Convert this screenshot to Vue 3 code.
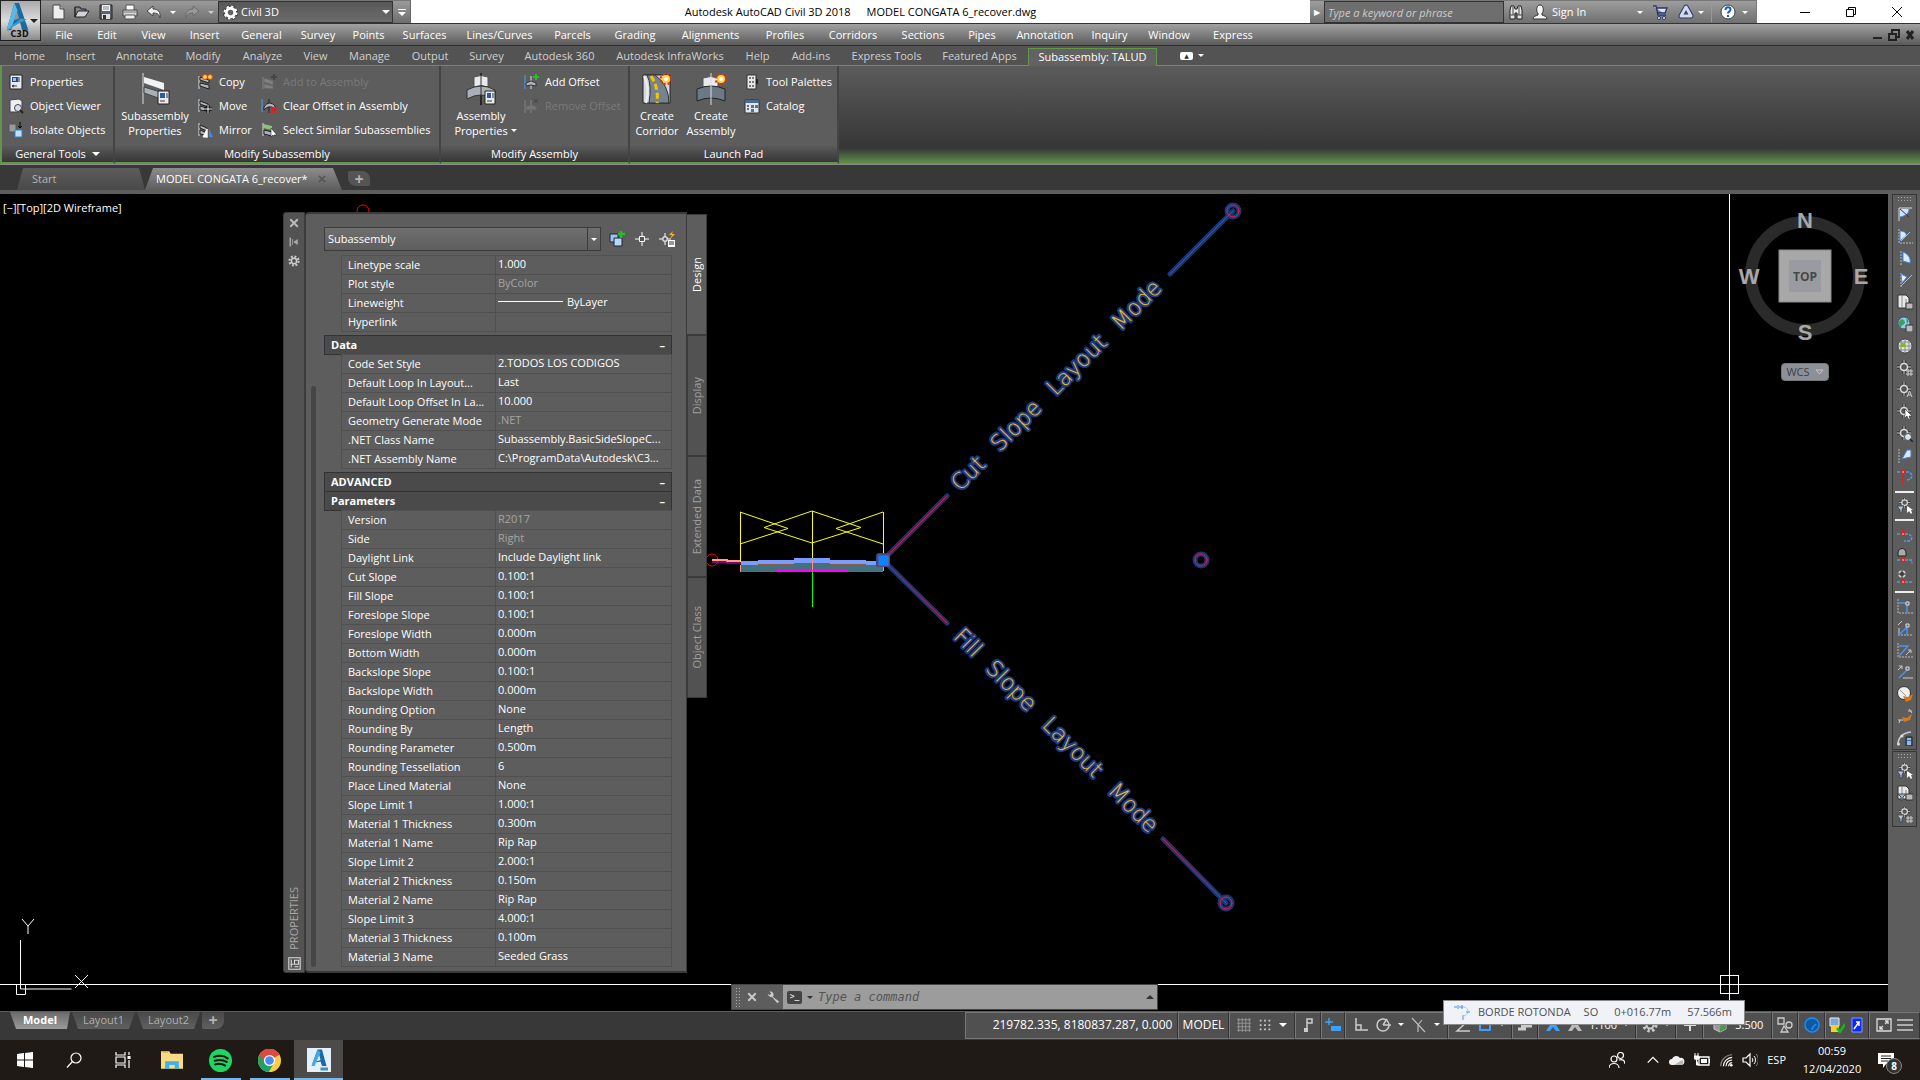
<script setup>
import { h } from 'vue'

const icons = {
  newFile: '<path d="M3 1h7l4 4v10H3z" fill="#eee" stroke="#444"/><path d="M10 1v4h4" fill="#bbb" stroke="#444"/>',
  open: '<path d="M1 3h5l1 2h5v3" fill="#777" stroke="#222"/><path d="M1 3v10l3-6h11l-4 6H1z" fill="#cfd3da" stroke="#222"/>',
  save: '<path d="M2 1h12v14H2z" fill="#5c6470" stroke="#222"/><path d="M4 1h8v6H4z" fill="#f2f2f2"/><path d="M5 3h6M5 5h6" stroke="#888"/><path d="M4 10h8v5H4z" fill="#ddd"/><path d="M5 11h3v4H5z" fill="#333"/>',
  print: '<path d="M4 1h8v6H4z" fill="#fff" stroke="#555"/><path d="M1 6h14v6H1z" fill="#d8d8d8" stroke="#444"/><path d="M3 11h10v4H3z" fill="#eee" stroke="#555"/><path d="M2 8h12" stroke="#777"/>',
  undo: '<path d="M1 7l6-5v3c5 0 8 3 7 9-1-4-3-5-7-5v3z" fill="#eee" stroke="#444"/>',
  redo: '<path d="M15 7L9 2v3c-5 0-8 3-7 9 1-4 3-5 7-5v3z" fill="#999" stroke="#6a6a6a"/>',
  gear: '<circle cx="8" cy="8" r="6" fill="none" stroke="#222" stroke-width="4" stroke-dasharray="3.2 1.5"/><circle cx="8" cy="8" r="4.5" fill="none" stroke="#fff" stroke-width="3"/><circle cx="8" cy="8" r="6.5" fill="none" stroke="#fff" stroke-width="2" stroke-dasharray="2.6 2.5"/>',
  gearGray: '<circle cx="8" cy="8" r="3.5" fill="none" stroke="#ccc" stroke-width="2"/><circle cx="8" cy="8" r="6" fill="none" stroke="#ccc" stroke-width="3" stroke-dasharray="2.4 2.3"/>',
  binoc: '<path d="M2 6l1-4h3l1 3h2l1-3h3l1 4v9H9V9H7v6H2z" fill="#e6e6ea" stroke="#222"/><path d="M2 11h5M9 11h5M5 3v8M11 3v8" stroke="#444"/>',
  person: '<path d="M1 15c0-3 3-3 5-4V9C4 8 4 1 8 1s4 7 2 8v2c2 1 5 1 5 4z" fill="#f4f4f8" stroke="#333"/>',
  cart: '<path d="M1 2h3l2 9h8M4 4h11l-2 5H6" fill="#dfe3f2" stroke="#26366f" stroke-width="1.3"/><circle cx="7" cy="14" r="1.5" fill="#fff" stroke="#26366f"/><circle cx="12" cy="14" r="1.5" fill="#fff" stroke="#26366f"/>',
  aApp: '<path d="M8 3L3 12h10z" fill="none" stroke="#26366f" stroke-width="5" stroke-linejoin="round"/><path d="M8 3L3 12h10z" fill="none" stroke="#d5daea" stroke-width="3" stroke-linejoin="round"/>',
  help: '<circle cx="8" cy="8" r="7" fill="#fff" stroke="#345"/><path d="M5.500 6c0-4 5-3.500 5-.5 0 2-2.500 2-2.500 4M8 11v2" fill="none" stroke="#1f57c0" stroke-width="2"/>',
  props: '<path d="M2 1h12v14H2z" fill="#e8ecf2" stroke="#222"/><path d="M4 3h6v5H4z" fill="#234a8c"/><path d="M5 4h3v3H5z" fill="#9dbff0"/><path d="M11 3v5M4 12h5M4 12l2-1M4 12l2 1" stroke="#333"/>',
  viewer: '<path d="M2 2l9-1 3 2v9l-3 2H2z" fill="#eceff4" stroke="#444"/><circle cx="10" cy="10" r="3.500" fill="#d5dfec" stroke="#444"/><path d="M12 12l3 3" stroke="#222" stroke-width="2"/>',
  isolate: '<path d="M1 2h7v8H1z" fill="#9a9a9a" stroke="#555"/><path d="M7 8h7v7H7z" fill="#bfe0fa" stroke="#3180c8"/><path d="M12 0v6M10 4l2 2 2-2" stroke="#000" fill="none"/>',
  copy: '<path d="M2 2v13" stroke="#ddd"/><path d="M3 3l9 3v3L3 6zM3 9l9 2v4L3 12z" fill="#aeb4bc" stroke="#222"/><circle cx="8" cy="3" r="2.500" fill="#ffd23c" stroke="#d4481c"/><circle cx="13" cy="3" r="2.500" fill="#ffd23c" stroke="#d4481c"/>',
  move: '<path d="M2 1v13" stroke="#ddd"/><path d="M3 3l8 3v3L3 6zM3 8l7 2v3L3 12z" fill="#aeb4bc" stroke="#222"/><path d="M11 7v8M7 11h8" stroke="#000" stroke-width="3"/><path d="M11 7v8M7 11h8" stroke="#fff"/>',
  mirror: '<path d="M2 1v13" stroke="#ddd"/><path d="M3 3l7 3v3L3 6zM3 8l5 2v3l-5-1z" fill="#aeb4bc" stroke="#222"/><path d="M10 7l-4 8h4zM10 7v9" fill="#fff" stroke="#fff"/><path d="M12 7l4 8h-4z" fill="#3c8ee0"/>',
  addTo: '<path d="M2 3v12" stroke="#888"/><path d="M3 4l9 3v4L3 8zM3 10l9 2v3l-9-1z" fill="#808080" stroke="#6a6a6a"/><path d="M13 0v6M10 3h6" stroke="#444" stroke-width="2"/>',
  clear: '<path d="M1 1v13" stroke="#4aa0ee"/><path d="M8 1v14" stroke="#222"/><path d="M3 9c3-5 8-5 11-1v3c-3-3-8-3-11 1z" fill="#aeb4bc" stroke="#222"/><path d="M10 9l6 6M16 9l-6 6" stroke="#e02020" stroke-width="2"/>',
  select: '<path d="M2 1v13" stroke="#ddd"/><path d="M2 2l9 2v4L2 6z" fill="#8fc27a"/><path d="M3 8l8 2v4l-8-2z" fill="#aeb4bc" stroke="#222"/><path d="M10 6v9l2-2 1 3h1l-1-3h3z" fill="#fff" stroke="#222" stroke-width=".6"/>',
  addOff: '<path d="M2 1v14" stroke="#4aa0ee"/><path d="M8 2v13" stroke="#ddd"/><path d="M3 9l5-2 5 2v3l-5-1-5 1z" fill="#aeb4bc" stroke="#333"/><path d="M13 0v6M10 3h6" stroke="#1fc01f" stroke-width="2"/>',
  remOff: '<path d="M2 2v13M8 2v13" stroke="#848484"/><path d="M3 9l5-2 5 2v3l-5-1-5 1z" fill="#777" stroke="#6a6a6a"/><path d="M11 1l4 4M15 1l-4 4" stroke="#444"/>',
  palettes: '<path d="M3 1h9v14H3z" fill="#e8e8e8" stroke="#333"/><path d="M5 3h2v2H5zM8 3h2v2H8zM5 7h2v2H5zM8 7h2v2H8zM5 11h2v2H5zM8 11h2v2H8z" fill="#777"/><path d="M13 5v5" stroke="#222" stroke-width="2"/>',
  catalog: '<path d="M1 2h14v13H1z" fill="#dfe6ee" stroke="#333"/><path d="M1 2h14v3H1z" fill="#4c6b90"/><path d="M3 7h2v2H3zM3 10h2v2H3zM7 7h3v3H7zM11 7h3v3h-3zM7 11h3v3H7z" fill="#5b708c"/>',
  quick: '<path d="M1 3h8v8H1z" fill="#9cc4ee" stroke="#223"/><path d="M5 7h8v8H5z" fill="#b8d6f6" stroke="#223"/><path d="M12 0v7M9 3h7" stroke="#20c020" stroke-width="2.500"/>',
  pick: '<path d="M8 1v14M1 8h14" stroke="#fff"/><path d="M5.500 5.500h5v5h-5z" fill="#555" stroke="#fff"/>',
  pickq: '<path d="M6 2v12M0 8h12" stroke="#fff"/><path d="M4 6h4v4H4z" fill="#555" stroke="#fff"/><path d="M14 0l-4 4h3l-2 4 5-5h-3z" fill="#ffb030"/><path d="M9 9h7v7H9z" fill="#fff"/><path d="M10 11h5M10 13h5" stroke="#333"/>',
  arcA: '<path d="M2 2v13M2 2h13" stroke="#ddd"/><path d="M3 3h9c0 5-4 7-9 8z" fill="#cfe2f8"/><path d="M12 3c0 5-4 7-9 8" stroke="#3f8ae0" fill="none"/><path d="M3 3l9 8" stroke="#333"/>',
  arcB: '<path d="M2 1v14h14" stroke="#bbb" stroke-dasharray="2 1" fill="none"/><path d="M3 3c5 0 7 3 6 5l-6 5z" fill="#dce9f8" stroke="#3f8ae0"/><path d="M4 13l9-9" stroke="#bbb"/>',
  arcC: '<path d="M4 1v14" stroke="#bbb" stroke-dasharray="2 1"/><path d="M6 2c5 2 8 6 7 11L6 11z" fill="#dce9f8" stroke="#3f8ae0"/>',
  arcD: '<path d="M4 1v14" stroke="#bbb" stroke-dasharray="2 1"/><path d="M4 2l6 3-5 6z" fill="#e8f0fa" stroke="#3f8ae0"/><path d="M4 14L15 3" stroke="#bbb"/>',
  sheet: '<path d="M1 1h8l3 3v10H1z" fill="#e8e8e8" stroke="#333"/><path d="M5 1v13M9 5v9" stroke="#888"/><path d="M9 9h7v6H9z" fill="#bbb" stroke="#333"/>',
  globe: '<circle cx="7" cy="7" r="6" fill="#8fd0e8" stroke="#456"/><path d="M3 4c3-2 4 0 5 2S4 9 4 12C2 10 1 7 3 4zM9 2l3 3-2 3z" fill="#3e9e6a"/><path d="M9 9h7v7H9z" fill="#bbb" stroke="#333"/>',
  grid: '<circle cx="8" cy="8" r="7" fill="#e2e2e2" stroke="#444"/><path d="M1 8h14M8 1v14M3 4h10M3 12h10M4 3v10M12 3v10" stroke="#888"/><path d="M4 5h4v4H4z" fill="#6fc21f"/>',
  tgt: '<path d="M7 0v14M0 7h14" stroke="#222" stroke-width="3"/><path d="M7 0v14M0 7h14" stroke="#ddd"/><circle cx="7" cy="7" r="3.500" fill="#555" stroke="#ddd" stroke-width="1.500"/>',
  cone: '<path d="M2 1v14" stroke="#bbb" stroke-dasharray="2 1"/><path d="M5 11l5-9h4v7l-5 1z" fill="#dce6f4" stroke="#3f7fd0"/>',
  redT: '<path d="M0 2h4M9 2h3c4 2 4 7-2 8" stroke="#5b95dc" stroke-width="1.500" stroke-dasharray="3 1" fill="none"/><path d="M6 2v14" stroke="#e02020" stroke-width="1.500"/><circle cx="6" cy="2" r="1.500" fill="#fff" stroke="#e02020" stroke-width="1.500"/>',
  redB: '<path d="M0 8h4M8 8h3c5 1 5 7 0 7H7" stroke="#5b95dc" stroke-width="1.500" stroke-dasharray="3 1" fill="none"/><path d="M6 1v7" stroke="#e02020"/><circle cx="6" cy="8" r="1.500" fill="#fff" stroke="#e02020" stroke-width="1.500"/>',
  redC: '<path d="M1 5c0-6 8-6 8 0v3H1z" fill="#aaa" stroke="#222"/><path d="M0 12h15" stroke="#5b95dc" stroke-width="1.500" stroke-dasharray="3 1"/><path d="M12 12c3 0 3 2 3 4" stroke="#5b95dc" fill="none"/><circle cx="6" cy="12" r="1.500" fill="#fff" stroke="#e02020" stroke-width="1.500"/>',
  redD: '<circle cx="5" cy="4" r="3" fill="none" stroke="#ccc" stroke-width="1.500"/><path d="M5 0v8M1 4h8" stroke="#333"/><path d="M0 12h15" stroke="#5b95dc" stroke-width="1.500" stroke-dasharray="3 1"/><circle cx="6" cy="12" r="1.500" fill="#fff" stroke="#e02020" stroke-width="1.500"/>',
  ptA: '<path d="M1 1v14h15" stroke="#bbb" stroke-dasharray="2 1" fill="none"/><path d="M2 5h8v10" stroke="#4b93ee" stroke-width="1.500" fill="none"/><path d="M9 4h3v3H9z" fill="#666" stroke="#ddd"/>',
  ptB: '<path d="M1 15h15" stroke="#bbb" stroke-dasharray="2 1"/><path d="M1 5l4-4M2 8v6" stroke="#ccc"/><path d="M2 15l8-8v8" stroke="#4b93ee" stroke-width="1.500" fill="none"/><path d="M9 4h3v3H9z" fill="#666" stroke="#ddd"/>',
  ptC: '<path d="M1 1v14h15" stroke="#bbb" stroke-dasharray="2 1" fill="none"/><path d="M2 4h9L2 14" stroke="#4b93ee" stroke-width="1.500" fill="none"/><path d="M9 13l5-5h-3m3 0v3" stroke="#ccc" fill="none"/>',
  ptD: '<path d="M1 6l4-4H2m3 0v3" stroke="#ccc" fill="none"/><path d="M2 14l9-9" stroke="#4b93ee" stroke-width="1.500"/><path d="M9 3h3v3H9z" fill="#666" stroke="#ddd"/><path d="M6 14h10" stroke="#ccc"/>',
  ball: '<circle cx="7" cy="7" r="6.500" fill="#eee" stroke="#333"/><path d="M3 4l6 6" stroke="#999"/><path d="M6 10l5 1 5-3-2 6-5 2z" fill="#d87818"/>',
  hand: '<path d="M5 9l5 1 5-4-2 6-6 2z" fill="#d87818"/><path d="M2 15l1-3M1 12h5M11 3h4M12 1l3 4" stroke="#ccc"/>',
  calc: '<path d="M1 15c0-8 5-12 13-13" stroke="#ccc" stroke-width="1.500" fill="none"/><path d="M9 7h6v9H9z" fill="#3c6db0" stroke="#223"/><path d="M10 9h4M10 12h4M10 14h4" stroke="#fff"/><circle cx="1.500" cy="14" r="1.500" fill="#ddd"/><circle cx="5" cy="6" r="1.500" fill="#ddd"/>',
  note: '<path d="M7 13V2h5v4H7" fill="none" stroke="#ccc" stroke-width="1.500"/><path d="M4 11h4v4H4z" fill="#ccc"/>',
  dyn: '<path d="M4 1v7M0 5h8" stroke="#3ba0ff" stroke-width="1.500"/><path d="M6 9h10v5H6z" fill="#3ba0ff"/>',
  ortho: '<path d="M3 1v12h12M3 8h5v5" fill="none" stroke="#ccc" stroke-width="1.500"/>',
  polar: '<circle cx="7" cy="8" r="6" fill="none" stroke="#ccc" stroke-width="1.500"/><path d="M7 8h8M7 8l4-6" stroke="#ccc" stroke-width="1.500"/>',
  iso: '<path d="M1 1l13 14M11 3L7 8M7 8v7" stroke="#bbb" stroke-width="1.200"/>',
  angle: '<path d="M14 3L2 14h13" fill="none" stroke="#ccc" stroke-width="1.500"/>',
  osnap: '<path d="M3 3h10v10H3z" fill="none" stroke="#3ba0ff" stroke-width="2"/>',
  lwt: '<path d="M1 12h8M4 9h11" stroke="#ccc" stroke-width="3"/>',
  annoB: '<path d="M8 3L1 14h4l3-4 3 4h4z" fill="#3ba0ff"/>',
  annoG: '<path d="M8 3L1 14h4l3-4 3 4h4z" fill="#bbb"/>',
  plus: '<path d="M8 2v12M2 8h12" stroke="#ddd" stroke-width="2"/>',
  cube: '<path d="M8 3l6 3v6l-6 3-6-3V6z" fill="#999" stroke="#ccc"/><path d="M8 9v6l6-3V6z" fill="#4b9a4b"/>',
  shapes: '<path d="M1 1h6v6H1zM7 9l4 6H4z" fill="none" stroke="#ccc" stroke-width="1.300"/><circle cx="12" cy="8" r="3" fill="none" stroke="#ccc" stroke-width="1.300"/>',
  hw: '<circle cx="8" cy="8" r="7" fill="#0e5aa0" stroke="#1b8cff" stroke-width="1.500"/><path d="M8 11l4-4M7 12h2" stroke="#1b8cff" stroke-width="1.500"/>',
  xref: '<path d="M1 1h9v8H1z" fill="#7aa7d8" stroke="#eee"/><path d="M2 8h8v7H2z" fill="#f5d22a"/><path d="M8 11l3 4 5-8" stroke="#20b020" stroke-width="2.500" fill="none"/>',
  link: '<path d="M3 1h10v14H3z" fill="#0a28ff" stroke="#7a9cff"/><path d="M5 12l5-7H7m3 0v4" stroke="#fff" fill="none" stroke-width="1.500"/>',
  full: '<path d="M1 2h14v12H1z" fill="none" stroke="#ddd" stroke-width="1.300"/><path d="M9 7l3-3M12 7V4H9M7 9l-3 3M4 9v3h3" stroke="#ddd" fill="none" stroke-width="1.300"/>',
  burger: '<path d="M0 3h16M0 8h16M0 13h16" stroke="#ccc" stroke-width="1.600"/>',
  dots: '<path d="M2 0v16M6 0v16M10 0v16M14 0v16M0 2h16M0 6h16M0 10h16M0 14h16" stroke="#9a9a9a" stroke-width="1"/>',
  snap: '<g fill="#ccc"><path d="M2 2h2v2H2zM7 2h2v2H7zM12 2h2v2h-2zM2 7h2v2H2zM7 7h2v2H7zM12 7h2v2h-2zM2 12h2v2H2zM7 12h2v2H7zM12 12h2v2h-2z"/></g>',
  curve: '<path d="M0 3h3M5 3h4M4 1v4M8 1v4" stroke="#4b93ee"/><path d="M9 3c6 0 7 7 1 9" stroke="#9cc0ee" fill="none" stroke-dasharray="3 1"/><path d="M9 11v5M12 8h4" stroke="#4b93ee"/>',
  wrench: '<path d="M14 4a4 4 0 0 1-5 4l-6 7-2-2 7-5c-2-4 1-7 4-6l-2 2 2 2z" fill="#ccc" transform="matrix(-1 0 0 1 16 0)"/>',
  autoHide: '<path d="M3 2v12" stroke="#aaa" stroke-width="2"/><path d="M13 4v8L7 8z" fill="#aaa"/><path d="M6 4v8" stroke="#aaa"/>',
  cross: '<path d="M3 3l10 10M13 3L3 13" stroke="currentColor" stroke-width="2.500"/>',
  palIcon: '<path d="M1 1h14v14H1z" fill="none" stroke="#ddd" stroke-width="1.300"/><path d="M4 3v10M7 9H3M8 4h5v5H8zM8 12h5" fill="none" stroke="#ddd" stroke-width="1.300"/>',
  windows: '<path d="M0 2l7-1v6.500H0zM8 1l8-1v7.500H8zM0 8.500h7V15l-7-1zM8 8.500h8V16l-8-1z" fill="#fff"/>',
  search: '<circle cx="10" cy="6" r="5" fill="none" stroke="#fff" stroke-width="1.200"/><path d="M6.500 9.500L1 15.500" stroke="#fff" stroke-width="1.200"/>',
  task: '<path d="M1 0v3h9V0M1 5h9v6H1zM1 16v-3h9v3M14 0v3M14 8v8" fill="none" stroke="#fff" stroke-width="1.200"/><path d="M12.500 4h3v3h-3z" fill="#fff"/>',
  folder: '<path d="M0 1h6l1 2h9v12H0z" fill="#fadb84"/><path d="M1 1h4v1H1z" fill="#d9a334"/><path d="M3 9h10v6h-3v-3H6v3H3z" fill="#3fb3e8"/>',
  spotify: '<circle cx="8" cy="8" r="8" fill="#1ed760"/><path d="M3.500 5.500c3-1 7-.8 9.500 1M4 8.200c3-.8 6-.5 8.300.8M4.300 10.700c2.500-.7 5-.4 7 .8" fill="none" stroke="#111" stroke-width="1.400" stroke-linecap="round"/>',
  chrome: '<circle cx="8" cy="8" r="8" fill="#ffcd42"/><path d="M8 8L1.100 4A8 8 0 0 1 15 4z" fill="#dd4b3e"/><path d="M1.100 4A8 8 0 0 0 7.500 16L11 10 8 8z" fill="#1da362"/><path d="M8 4h7a8 8 0 0 0-14-.2L5 10z" fill="#dd4b3e"/><circle cx="8" cy="8" r="3.900" fill="#fff"/><circle cx="8" cy="8" r="3" fill="#4c8bf5"/>',
  acad: '<path d="M0 0h16v16H0z" fill="#e4f0fa"/><path d="M3 12L7 1h3l3 11h-3l-1-3-5 1z" fill="#1b6aa5"/><path d="M8 4l1 4-3 1z" fill="#e4f0fa"/><path d="M7 1L3 12h2L9 3z" fill="#4aa8dc"/><path d="M9 13h5v2H9z" fill="#3f8fc8"/>',
  logo: '<path d="M1 15L6 0h3l6 15h-4L9.500 10.500 5 12l-1 3z" fill="#1a6aa0"/><path d="M7.500 4l1.500 4.500-3 1z" fill="#8f9499"/><path d="M6 0L1 15l3-1L8 4z" fill="#5cb8e4"/><path d="M5 12l-4 3 13-6-4-.5z" fill="#3a96cc"/>',
  people: '<circle cx="5" cy="7" r="3" fill="none" stroke="#fff" stroke-width="1.200"/><path d="M0 16c0-6 10-6 10 0" fill="none" stroke="#fff" stroke-width="1.200"/><circle cx="11.500" cy="3.500" r="3" fill="none" stroke="#fff" stroke-width="1.200"/><path d="M10 8c3-1 6 0 6 4" fill="none" stroke="#fff" stroke-width="1.200"/>',
  up: '<path d="M2 11l6-6 6 6" fill="none" stroke="#fff" stroke-width="1.500"/>',
  cloud: '<path d="M3 13a3 3 0 0 1 0-6 4.500 4.500 0 0 1 8-1 3.500 3.500 0 0 1 1.500 7z" fill="#f2f2f2"/><path d="M5 13l8-5a3 3 0 0 1 0 5z" fill="#b8b8b8"/>',
  batt: '<path d="M5 5h10v8H5z" fill="none" stroke="#fff" stroke-width="1.300"/><path d="M7 7h6v4H7zM15 7h1v4h-1z" fill="#fff"/><path d="M1 1v3M4 1v3M0 4h5v2c0 2-5 2-5 0zM2.500 7v6H5" stroke="#fff" fill="#fff" stroke-width="1"/>',
  wifi: '<g fill="none" stroke="#fff" stroke-width="1.300"><path d="M2 15C2 8 8 2 15 2" opacity=".5"/><path d="M5 15c0-5 5-10 10-10M8 15c0-4 3-7 7-7M11 15c0-2 2-4 4-4"/></g><circle cx="14" cy="14" r="1.500" fill="#fff"/>',
  vol: '<path d="M1 6h3l4-4v12l-4-4H1z" fill="none" stroke="#fff" stroke-width="1.200"/><path d="M10 6c1 1 1 3 0 4M12 4c2 2 2 6 0 8" fill="none" stroke="#fff"/><path d="M14 2c3 3 3 9 0 12" fill="none" stroke="#888"/>',
  notif: '<path d="M0 1h16v11H8l-3 4v-4H0z" fill="#fff"/><path d="M3 4h10M3 6.500h10M3 9h7" stroke="#222"/>',
}
icons.tgtGrid = icons.tgt + '<path d="M11 9v7M14 9v7M9 11h7M9 14h7" stroke="#ccc"/>'
icons.tgtA = icons.tgt + '<path d="M10 15l2.500-6 2.500 6M11 13h3" stroke="#ccc" fill="none"/>'
icons.tgtCur = icons.tgt + '<path d="M8 5v9l2-2 2 4 1-1-1-3h3z" fill="#fff" stroke="#222" stroke-width=".5"/>'
icons.tgtZoom = icons.tgt + '<circle cx="11" cy="11" r="3.500" fill="#d6e6f5" stroke="#555"/><path d="M13 13l3 3" stroke="#222" stroke-width="1.500"/>'
icons.tgtFun = '<g transform="translate(2 -1) scale(.8)">' + icons.tgt + '</g><path d="M0 8h7l-2 4v3H3v-3z" fill="#b8c6d4" stroke="#445"/><path d="M10 8v7l2-2 2 3 1-1-1-3h2z" fill="#fff"/>'
icons.sheetFun = icons.sheet + '<path d="M1 9h8l-3 3v3H4v-3z" fill="#9fb4c8" stroke="#445"/>'
icons.gridFun = '<g transform="translate(2 -1) scale(.8)">' + icons.tgt + '</g><path d="M0 8h7l-2 4v3H3v-3z" fill="#b8c6d4" stroke="#445"/><path d="M11 9v7M14 9v7M9 11h7M9 14h7" stroke="#ccc"/>'

const Ico = (p) => h('svg', { viewBox: '0 0 16 16', width: p.s || 16, height: p.h || p.s || 16, preserveAspectRatio: 'none', 'aria-hidden': 'true', innerHTML: icons[p.n] })
Ico.props = ['n', 's', 'h']

const menus = [['File', 42], ['Edit', 44], ['View', 49], ['Insert', 53], ['General', 61], ['Survey', 52], ['Points', 49], ['Surfaces', 63], ['Lines/Curves', 87], ['Parcels', 59], ['Grading', 66], ['Alignments', 85], ['Profiles', 64], ['Corridors', 72], ['Sections', 68], ['Pipes', 50], ['Annotation', 76], ['Inquiry', 53], ['Window', 66], ['Express', 62]]
const tabs = [['Home', 53], ['Insert', 49], ['Annotate', 69], ['Modify', 58], ['Analyze', 61], ['View', 45], ['Manage', 63], ['Output', 58], ['Survey', 55], ['Autodesk 360', 91], ['Autodesk InfraWorks', 130], ['Help', 45], ['Add-ins', 62], ['Express Tools', 89], ['Featured Apps', 97]]

const groups = [
  { rows: [['Linetype scale', '1.000'], ['Plot style', 'ByColor', 1], ['Lineweight', 'ByLayer', 2], ['Hyperlink', '']] },
  { title: 'Data', rows: [['Code Set Style', '2.TODOS LOS CODIGOS'], ['Default Loop In Layout...', 'Last'], ['Default Loop Offset In La...', '10.000'], ['Geometry Generate Mode', '.NET', 1], ['.NET Class Name', 'Subassembly.BasicSideSlopeC...'], ['.NET Assembly Name', 'C:\\ProgramData\\Autodesk\\C3...']] },
  { title: 'ADVANCED', rows: [] },
  { title: 'Parameters', rows: [['Version', 'R2017', 1], ['Side', 'Right', 1], ['Daylight Link', 'Include Daylight link'], ['Cut Slope', '0.100:1'], ['Fill Slope', '0.100:1'], ['Foreslope Slope', '0.100:1'], ['Foreslope Width', '0.000m'], ['Bottom Width', '0.000m'], ['Backslope Slope', '0.100:1'], ['Backslope Width', '0.000m'], ['Rounding Option', 'None'], ['Rounding By', 'Length'], ['Rounding Parameter', '0.500m'], ['Rounding Tessellation', '6'], ['Place Lined Material', 'None'], ['Slope Limit 1', '1.000:1'], ['Material 1 Thickness', '0.300m'], ['Material 1 Name', 'Rip Rap'], ['Slope Limit 2', '2.000:1'], ['Material 2 Thickness', '0.150m'], ['Material 2 Name', 'Rip Rap'], ['Slope Limit 3', '4.000:1'], ['Material 3 Thickness', '0.100m'], ['Material 3 Name', 'Seeded Grass']] },
]
const sideTabs = ['Design', 'Display', 'Extended Data', 'Object Class']
const dock = [
  ['arcA', 'arcB', 'arcC', 'arcD', 'sheet', 'globe', 'grid', 'tgtGrid', 'tgtA', 'tgtCur', 'tgtZoom', 'cone', 'redT', '-', 'tgtFun', '-', 'redB', 'redC', 'redD', '-', 'ptA', 'ptB', 'ptC', 'ptD', 'ball', 'hand', 'calc'],
  ['tgtFun', 'sheetFun', 'gridFun'],
]
const status = [
  { w: 26, items: ['note'] }, { w: 24, items: ['dyn'] }, { w: 103, items: ['ortho', 'polar', '▾', 'iso', '▾'] },
  { w: 64, items: ['angle', 'osnap', '▾'] }, { w: 26, items: ['lwt'] }, { w: 98, items: ['annoB', 'annoG', '1.100', '▾'] },
  { w: 40, items: ['gearGray', '▾'] }, { w: 27, items: ['plus'] }, { w: 69, items: ['cube', '3.500'] }, { w: 26, items: ['shapes'] },
  { w: 27, items: ['hw'] }, { w: 44, items: ['xref', 'link'] }, { w: 51, items: ['full', 'burger'] },
]
</script>

<template>
  <div class="app">
    <header class="title-bar">
      <div class="quick">
        <button aria-label="New"><Ico n="newFile" /></button>
        <button aria-label="Open"><Ico n="open" /></button>
        <button aria-label="Save"><Ico n="save" /></button>
        <button aria-label="Print"><Ico n="print" /></button>
        <button aria-label="Undo"><Ico n="undo" /></button>
        <i class="tri narrow"></i>
        <button aria-label="Redo"><Ico n="redo" /></button>
        <i class="tri narrow dim"></i>
        <label class="workspace"><Ico n="gear" :s="15" /><select aria-label="Workspace"><option>Civil 3D</option></select><i class="tri"></i></label>
        <button class="more" aria-label="Customize"><i class="bar"></i><i class="tri"></i></button>
      </div>
      <div class="caption"><span>Autodesk AutoCAD Civil 3D 2018</span><span>MODEL CONGATA 6_recover.dwg</span></div>
      <div class="info">
        <button class="expand" aria-label="Collapse">▶</button>
        <input type="text" placeholder="Type a keyword or phrase" aria-label="Search" />
        <button aria-label="Find"><Ico n="binoc" /></button>
        <button class="sign"><Ico n="person" /><span>Sign In</span><i class="tri small"></i></button>
        <button aria-label="Store"><Ico n="cart" /></button>
        <button class="apps" aria-label="Apps"><Ico n="aApp" /><i class="tri small"></i></button>
        <button class="helpb" aria-label="Help"><Ico n="help" /><i class="tri small"></i></button>
      </div>
      <div class="win">
        <button aria-label="Minimize"><svg width="10" height="10"><path d="M0 5.500h10" stroke="#000" /></svg></button>
        <button aria-label="Restore"><svg width="10" height="10"><path d="M.5 2.500h7v7h-7zM2.500 2.500v-2h7v7h-2" fill="none" stroke="#000" /></svg></button>
        <button aria-label="Close"><svg width="10" height="10"><path d="M0 0l10 10M10 0L0 10" stroke="#000" /></svg></button>
      </div>
    </header>
    <button class="app-btn" aria-label="Application menu"><Ico n="logo" :s="25" :h="29" /><i class="tri dark"></i><b>C3D</b></button>

    <nav class="menu-bar">
      <button v-for="m in menus" :key="m[0]" :style="{ width: m[1] + 'px' }">{{ m[0] }}</button>
      <div class="doc-win">
        <svg width="44" height="14"><path d="M1 10h9" stroke="#222" stroke-width="2" /><path d="M17 6h7v6h-7zM20 5V2h7v7h-3" fill="none" stroke="#222" stroke-width="2" /><path d="M35 3l6 8M41 3l-6 8" stroke="#222" stroke-width="3" /></svg>
      </div>
    </nav>

    <nav class="tab-bar">
      <button v-for="t in tabs" :key="t[0]" :style="{ width: t[1] + 'px' }">{{ t[0] }}</button>
      <button class="current">Subassembly: TALUD</button>
      <button class="toggle" aria-label="Minimize ribbon"><i class="pill">▲</i><i class="tri small"></i></button>
    </nav>

    <section class="ribbon">
      <div class="panel p1">
        <div class="tools">
          <div class="col">
            <button><Ico n="props" /><span>Properties</span></button>
            <button><Ico n="viewer" /><span>Object Viewer</span></button>
            <button><Ico n="isolate" /><span>Isolate Objects</span></button>
          </div>
        </div>
        <h2>General Tools <i class="tri"></i></h2>
      </div>
      <div class="panel p2">
        <div class="tools">
          <button class="big wide">
            <svg width="32" height="32" viewBox="0 0 32 32"><path d="M4 0v31" stroke="#ddd" /><path d="M5 4l20 6v7L5 10z" fill="#f0f2f4" /><path d="M5 14l20 6v7L5 20z" fill="#a9b0b8" stroke="#444" /><path d="M19 18h11v13H19z" fill="#e8ecf2" stroke="#222" /><path d="M21 20h5v5h-5z" fill="#2a5ba8" /><path d="M28 20v5M21 28h5" stroke="#333" /></svg>
            <span>Subassembly<br />Properties</span>
          </button>
          <div class="col edit">
            <button><Ico n="copy" /><span>Copy</span></button>
            <button><Ico n="move" /><span>Move</span></button>
            <button><Ico n="mirror" /><span>Mirror</span></button>
          </div>
          <div class="col">
            <button disabled><Ico n="addTo" /><span>Add to Assembly</span></button>
            <button><Ico n="clear" /><span>Clear Offset in Assembly</span></button>
            <button><Ico n="select" /><span>Select Similar Subassemblies</span></button>
          </div>
        </div>
        <h2>Modify Subassembly</h2>
      </div>
      <div class="panel p3">
        <div class="tools">
          <button class="big wide">
            <svg width="32" height="32" viewBox="0 0 32 32"><path d="M16 0v32" stroke="#222" stroke-width="2" /><path d="M9 4q7-3 14 0v10q-7-3-14 0z" fill="#e8eaee" stroke="#555" /><path d="M2 17q14-8 28 0v9q-14-8-28 0z" fill="#a9b0b8" stroke="#333" /><path d="M16 0v28" stroke="#333" /><path d="M20 18h10v13H20z" fill="#e8ecf2" stroke="#222" /><path d="M22 20h4v5h-4z" fill="#2a5ba8" /><path d="M28 20v5M22 28h5" stroke="#333" /></svg>
            <span>Assembly<br />Properties</span><i class="tri small"></i>
          </button>
          <div class="col">
            <button><Ico n="addOff" /><span>Add Offset</span></button>
            <button disabled><Ico n="remOff" /><span>Remove Offset</span></button>
          </div>
        </div>
        <h2>Modify Assembly</h2>
      </div>
      <div class="panel p4">
        <div class="tools">
          <button class="big">
            <svg width="32" height="32" viewBox="0 0 32 32"><path d="M2 2h27v28H2z" fill="#d4d9de" stroke="#222" /><path d="M6 2h8q14 10 14 28H8Q11 12 6 2z" fill="#77828f" stroke="#333" /><path d="M3 3q6 12 2 27" stroke="#eee" fill="none" stroke-width="2" /><path d="M10 3q8 12 6 27" stroke="#f5c400" stroke-width="3" stroke-dasharray="6 3" fill="none" /><circle cx="25" cy="6" r="5" fill="none" stroke="#d83a18" stroke-width="3" stroke-dasharray="2 2" /><circle cx="25" cy="6" r="4" fill="#ffd23c" /><circle cx="25" cy="6" r="2" fill="#fff" /></svg>
            <span>Create<br />Corridor</span>
          </button>
          <button class="big">
            <svg width="32" height="32" viewBox="0 0 32 32"><path d="M8 5q8-3 15 0v11q-7-3-15 0z" fill="#e8eaee" stroke="#555" /><path d="M2 16q14-6 28 0v12q-14-6-28 0z" fill="#6d7885" stroke="#222" /><path d="M16 0v32" stroke="#ddd" /><circle cx="26" cy="6" r="5" fill="none" stroke="#d83a18" stroke-width="3" stroke-dasharray="2 2" /><circle cx="26" cy="6" r="4" fill="#ffd23c" /><circle cx="26" cy="6" r="2" fill="#fff" /></svg>
            <span>Create<br />Assembly</span>
          </button>
          <div class="col">
            <button><Ico n="palettes" /><span>Tool Palettes</span></button>
            <button><Ico n="catalog" /><span>Catalog</span></button>
          </div>
        </div>
        <h2>Launch Pad</h2>
      </div>
    </section>

    <nav class="docs">
      <button class="doc start">Start</button>
      <button class="doc active"><span>MODEL CONGATA 6_recover*</span><Ico n="cross" :s="10" /></button>
      <button class="doc add" aria-label="New drawing">+</button>
    </nav>

    <main class="work">
      <div class="canvas">
        <svg class="drawing" width="100%" height="100%">
          <g fill="none" stroke="#f00">
            <circle cx="363" cy="17" r="6" />
            <circle cx="712" cy="366" r="6" />
          </g>
          <path d="M712 366h15v1h14" stroke="#ffa080" stroke-width="2" fill="none" />
          <path d="M712 368h15v1h14" stroke="#f0f" stroke-width="1" fill="none" />
          <g fill="none" stroke="#ff0">
            <path d="M740.500 318v50M812.500 317v50M883.500 318v44" />
            <path d="M740 318l48 16.500-48 15.500M812 317l-48 16.500 48 15.500 49-15.500zM883 318l-47 16.500 47 15.500" />
          </g>
          <path d="M741 367h17v-1h36v-2h36v2h36v1h17v5H741z" fill="#7b9cff" />
          <path d="M741 371h17v-1h36v-1h36v1h36v1h17v7H741z" fill="#44727c" />
          <path d="M758 370.500h36M830 370.500h36" stroke="#8a5a44" />
          <path d="M740.500 371v7M812.500 365v12M883.500 371v6" stroke="#ff8c7c" />
          <path d="M741 377.500h35v-1h72v1h35" fill="none" stroke="#f0f" stroke-width="1" />
          <path d="M812.500 377v36" stroke="#0f0" />
          <g fill="none" stroke-linecap="round">
            <path class="halo" d="M883 366l64-64M883 366l64 63M1170 80l63-63M1163 645l63 64" />
            <g class="halo"><circle cx="1233" cy="17" r="6" /><circle cx="1226" cy="709" r="6" /><circle cx="1201" cy="366" r="6" /></g>
            <path d="M883 366l64-64M883 366l64 63M1170 80l63-63M1163 645l63 64" stroke="#f01430" />
            <g stroke="#f01c38"><circle cx="1233" cy="17" r="6" /><circle cx="1226" cy="709" r="6" /><circle cx="1201" cy="366" r="6" /></g>
          </g>
          <rect x="876" y="359" width="14" height="14" rx="3" fill="#26489c" />
          <rect x="878" y="361" width="11" height="11" fill="#0a84ff" stroke="#8c3c5c" />
          <g class="cad" transform="translate(960 298) rotate(-45)"><text x="0">Cut</text><text x="56">Slope</text><text x="135">Layout</text><text x="227">Mode</text></g>
          <g class="cad" transform="translate(954 445) rotate(45)"><text x="-2">Fill</text><text x="43">Slope</text><text x="123">Layout</text><text x="216">Mode</text></g>
        </svg>

        <span class="view-label">[−][Top][2D Wireframe]</span>

        <svg class="ucs" width="100" height="100" fill="none" stroke="#fff">
          <path d="M20.500 17v49h51M16.500 61.500h9v10h-9zM22-4l6 7v8M34-4l-6 7M75 52l13 13M88 52L75 65" />
        </svg>
        <div class="cross-h"></div><div class="cross-v"></div><div class="pickbox"></div>

        <div class="cube">
          <svg width="150" height="150" viewBox="-75 -75 150 150">
            <circle r="54" fill="none" stroke="#2a2a2a" stroke-width="12" />
            <rect x="-26" y="-26" width="52" height="52" fill="#a8a8a8" stroke="#8a8a8a" />
            <rect x="-16" y="-16" width="32" height="32" fill="#9a9ba0" />
            <text class="top" y="5">TOP</text>
            <text y="-48">N</text><text y="64">S</text><text x="-56" y="8">W</text><text x="56" y="8">E</text>
          </svg>
          <button class="wcs">WCS <svg width="9" height="6"><path d="M1 1h7L4.500 5z" fill="none" stroke="#c4c4cc" /></svg></button>
        </div>

        <aside class="palette">
          <div class="strip">
            <Ico n="cross" :s="12" /><Ico n="autoHide" :s="12" /><Ico n="gearGray" :s="12" />
            <span class="vert">PROPERTIES</span><Ico n="palIcon" :s="13" />
          </div>
          <div class="body">
            <i class="scroll"></i>
            <div class="picker">
              <div class="combo"><select aria-label="Object type"><option>Subassembly</option></select><i class="tri small"></i></div>
              <button aria-label="Toggle PICKADD"><Ico n="quick" /></button>
              <button aria-label="Select objects"><Ico n="pick" /></button>
              <button aria-label="Quick select"><Ico n="pickq" /></button>
            </div>
            <section v-for="(g, i) in groups" :key="i">
              <h3 v-if="g.title"><span>{{ g.title }}</span><span>–</span></h3>
              <table v-if="g.rows.length">
                <tbody>
                  <tr v-for="r in g.rows" :key="r[0]">
                    <th scope="row">{{ r[0] }}</th>
                    <td :class="{ off: r[2] === 1 }"><i v-if="r[2] === 2" class="lw"></i>{{ r[1] }}</td>
                  </tr>
                </tbody>
              </table>
            </section>
          </div>
          <div class="side">
            <button v-for="(s, i) in sideTabs" :key="s" :class="{ on: i === 0 }"><span class="vert">{{ s }}</span></button>
          </div>
        </aside>

        <div class="command">
          <i class="grip"></i>
          <button aria-label="Close"><Ico n="cross" :s="12" /></button>
          <button aria-label="Customize"><Ico n="wrench" :s="14" /></button>
          <div class="field">
            <span class="prompt">&gt;_</span><i class="tri small"></i>
            <input type="text" placeholder="Type a command" aria-label="Command" /><i class="tri flip"></i>
          </div>
        </div>
      </div>
      <aside class="dock">
        <div v-for="(d, i) in dock" :key="i" class="bank">
          <i class="grip"></i>
          <template v-for="(n, j) in d" :key="j">
            <hr v-if="n === '-'" />
            <button v-else :aria-label="n"><Ico :n="n" /></button>
          </template>
        </div>
      </aside>
    </main>

    <footer class="status">
      <div class="layouts">
        <button class="on">Model</button><button>Layout1</button><button>Layout2</button><button class="add" aria-label="New layout">+</button>
      </div>
      <div class="cells">
        <div class="cell coords">219782.335, 8180837.287, 0.000</div>
        <div class="cell model">MODEL</div>
        <div class="cell grids"><Ico n="dots" :s="14" /><Ico n="snap" :s="14" /><i class="tri"></i></div>
        <div v-for="(c, i) in status" :key="i" class="cell" :style="{ width: c.w + 'px' }">
          <template v-for="(x, j) in c.items" :key="j">
            <i v-if="x === '▾'" class="tri small"></i>
            <span v-else-if="x.includes('.')">{{ x }}</span>
            <Ico v-else :n="x" />
          </template>
        </div>
      </div>
      <div class="tip"><Ico n="curve" /><span>BORDE ROTONDA</span><span>SO</span><span>0+016.77m</span><span>57.566m</span></div>
    </footer>

    <footer class="taskbar">
      <button aria-label="Start"><Ico n="windows" /></button>
      <button aria-label="Search"><Ico n="search" /></button>
      <button aria-label="Task view"><Ico n="task" /></button>
      <button aria-label="Explorer"><Ico n="folder" :s="22" :h="20" /></button>
      <button class="run" aria-label="Spotify"><Ico n="spotify" :s="23" /></button>
      <button class="run" aria-label="Chrome"><Ico n="chrome" :s="23" /></button>
      <button class="run front" aria-label="AutoCAD"><Ico n="acad" :s="24" /></button>
      <div class="tray">
        <Ico n="people" class="who" /><Ico n="up" :s="14" /><Ico n="cloud" /><Ico n="batt" /><Ico n="wifi" :s="14" /><Ico n="vol" /><span>ESP</span>
        <div class="clock"><span>00:59</span><span>12/04/2020</span></div>
        <div class="bell"><Ico n="notif" /><b>8</b></div>
      </div>
    </footer>
  </div>
</template>

<style>
body { margin: 0; background: #383838; }
</style>
<style scoped>
* { box-sizing: border-box; }
.app { position: relative; display: flex; flex-direction: column; min-height: 100vh; overflow: hidden; font: 11px/14px "Open Sans", "Noto Sans", sans-serif; color: #fff; background: #383838; }
button, input, select { font: inherit; color: inherit; border: 0; padding: 0; margin: 0; background: none; appearance: none; outline: 0; border-radius: 0; }
button { display: flex; align-items: center; justify-content: center; white-space: nowrap; flex: none; }
svg { display: block; flex: none; }
h2, h3 { margin: 0; font: inherit; }
.tri { display: block; flex: none; border: 4px solid transparent; border-top-color: #fff; border-bottom: 0; width: 0; height: 0; }
.tri.small, .tri.narrow { border-width: 3px 3px 0; }
.tri.dim { border-top-color: #ccc; }
.tri.dark { border-top-color: #222; }
.tri.flip { transform: rotate(180deg); }

.title-bar { display: flex; height: 24px; flex: none; background: #fff; border-bottom: 1px solid #333; color: #000; }
.quick { display: flex; align-items: center; width: 411px; padding-left: 46px; background: linear-gradient(#9a9a9a, #6e6e6e); border-top: 1px solid #777; border-right: 1px solid #666; color: #fff; }
.quick button { width: 24px; }
.quick .narrow { margin: 0 4px; }
.quick button.more { width: 17px; flex-direction: column; gap: 2px; }
.more .bar { width: 8px; height: 1px; background: #fff; }
.workspace { display: flex; align-items: center; width: 180px; height: 22px; margin-left: auto; padding: 0 2px 0 4px; border: 1px solid #333; background: linear-gradient(#585858, #6c6c6c); gap: 3px; }
.workspace select { flex: 1; }
.caption { flex: 1; display: flex; align-items: center; justify-content: center; gap: 16px; white-space: nowrap; }
.info { display: flex; align-items: center; width: 447px; border-top: 1px solid #777; border-right: 1px solid #777; background: linear-gradient(#9d9d9d, #707070); color: #fff; }
.info .expand { width: 14px; height: 22px; font-size: 8px; }
.info input { width: 180px; height: 22px; padding: 0 3px; border: 1px solid #333; background: #6e6e6e; font-style: italic; }
.info input::placeholder { color: #ccc; opacity: 1; }
.info button { width: 23px; }
.info button.sign { width: 121px; justify-content: flex-start; gap: 4px; padding-left: 5px; }
.sign .tri { margin-left: auto; margin-right: 5px; }
.info button.apps { width: 40px; gap: 4px; }
.info button.helpb { flex: 1; gap: 6px; border-left: 1px solid #999; height: 20px; }
.win { display: flex; width: 163px; align-items: center; justify-content: flex-end; }
.win button { width: 46px; height: 22px; }
.app-btn { position: absolute; left: 0; top: 0; width: 41px; height: 41px; border: 1px solid #222; background: linear-gradient(#aaa, #ddd 50%, #8a8a8a); }
.app-btn svg { position: absolute; left: 4px; top: 2px; }
.app-btn .tri { position: absolute; right: 2px; top: 18px; }
.app-btn b { position: absolute; left: 0; right: 0; bottom: 0; font: bold 8px/10px "DejaVu Sans", sans-serif; color: #111; text-align: center; padding-right: 2px; }

.menu-bar { display: flex; flex: none; height: 22px; padding-left: 43px; background: linear-gradient(#a2a2a2, #5a5a5a); border-bottom: 1px solid #2e2e2e; }
.doc-win { margin-left: auto; align-self: center; padding-right: 4px; }
.tab-bar { display: flex; flex: none; height: 20px; padding-left: 3px; background: #535353; border-bottom: 1px solid #64964a; color: #d0d0d0; }
.tab-bar .current { width: 129px; height: 18px; margin: 2px 0 -1px; align-self: flex-start; padding-bottom: 2px; border: 1px solid #64964a; border-bottom: 0; background: #626262; color: #fff; }
.tab-bar .toggle { margin-left: 23px; gap: 5px; }
.pill { width: 13px; height: 8px; border-radius: 2px; background: #fff; color: #333; font: 6px/8px "DejaVu Sans", sans-serif; text-align: center; }

.ribbon { display: flex; flex: none; height: 99px; background: linear-gradient(#5b5b5b, #363636 82px, #629648 98px); border-bottom: 1px solid #8a8a8a; border-left: 2px solid #64964a; }
.panel { display: flex; flex-direction: column; background: #5d5d5d; border-right: 2px solid #444; border-bottom: 2px solid #64964a; }
.p1 { width: 113px; } .p2 { width: 326px; } .p3 { width: 189px; } .p4 { width: 209px; }
.panel h2 { display: flex; align-items: center; justify-content: center; gap: 6px; height: 16px; margin-top: auto; background: linear-gradient(#5a5a5a, #363636); }
.tools { display: flex; padding: 4px 2px 0; }
.col { display: flex; flex-direction: column; padding-left: 4px; }
.col button { height: 24px; justify-content: flex-start; gap: 6px; }
.col button:disabled { color: #7a7a7a; }
.edit { width: 64px; }
.big { position: relative; width: 54px; flex-direction: column; justify-content: flex-start; gap: 3px; padding-top: 3px; line-height: 15px; }
.wide { width: 76px; }
.big .tri { position: absolute; right: 2px; bottom: 6px; }
.p4 .tools { padding-left: 0; }
.p4 .col { padding-left: 6px; }

.docs { display: flex; flex: none; align-items: flex-end; height: 29px; padding-left: 17px; background: #383838; border-bottom: 4px solid #5d5d5d; }
.doc { height: 22px; background: linear-gradient(#5c5c5c, #494949); color: #b4b4b4; border-radius: 8px 8px 0 0; }
.start { width: 128px; justify-content: flex-start; padding-left: 15px; clip-path: polygon(6px 0, 122px 0, 100% 100%, 0 100%); }
.active { width: 197px; justify-content: flex-start; padding-left: 11px; gap: 9px; background: linear-gradient(#8c8c8c, #5d5d5d); color: #fff; clip-path: polygon(8px 0, 188px 0, 100% 100%, 0 100%); }
.active svg { color: #555; }
.add { font: bold 16px/16px "Open Sans", sans-serif; color: #b4b4b4; }
.doc.add { width: 22px; height: 15px; margin: 0 0 4px 6px; background: #555; border-radius: 2px 8px 2px 8px; }

.work { display: flex; flex: 1; min-height: 817px; }
.canvas { position: relative; flex: 1; overflow: hidden; background: #000; }
.drawing { position: absolute; inset: 0; }
.view-label { position: absolute; left: 3px; top: 7px; }
.halo { stroke: #183878; stroke-width: 5; }
.cad { font: 200 22px "DejaVu Sans", sans-serif; fill: #f2b824; stroke: #1a3c88; stroke-width: 4px; stroke-linejoin: round; paint-order: stroke; }
.ucs { position: absolute; left: 0; bottom: -12px; overflow: visible; }
.cross-h { position: absolute; left: 0; right: 0; bottom: 26px; height: 1px; background: #fff; }
.cross-v { position: absolute; top: 0; bottom: 0; right: 158px; width: 1px; background: #fff; }
.pickbox { position: absolute; right: 149px; bottom: 17px; width: 19px; height: 19px; border: 1px solid #fff; }
.cube { position: absolute; right: 8px; top: 7px; display: flex; flex-direction: column; align-items: center; gap: 12px; }
.cube text { font: bold 22px "Liberation Sans", sans-serif; fill: #a8a8a8; text-anchor: middle; }
.cube text.top { font: bold 12px "Open Sans", sans-serif; fill: #45484c; }
.wcs { width: 48px; height: 18px; gap: 5px; border: 1px solid #777; border-radius: 4px; background: #8e9098; color: #3c3e44; }

.palette { position: absolute; left: 283px; top: 18px; display: flex; align-items: flex-start; }
.strip { align-self: stretch; width: 22px; display: flex; flex-direction: column; align-items: center; gap: 7px; padding: 4px 0 2px; background: #535353; border: 1px solid #3c3c3c; color: #bbb; border-radius: 3px 0 0 3px; }
.vert { writing-mode: vertical-rl; transform: rotate(180deg); }
.strip .vert { margin-top: auto; color: #a8a8a8; }
.body { position: relative; width: 382px; padding: 13px 14px 4px 18px; background: #5d5d5d; border: 1px solid #3a3a3a; border-width: 2px 1px; border-radius: 4px 0 0 4px; }
.scroll { position: absolute; left: 5px; top: 172px; bottom: 4px; width: 5px; border-radius: 3px; background: #464646; }
.picker { display: flex; align-items: center; height: 24px; margin: 0 -8px 4px 0; }
.combo { display: flex; align-items: center; flex: none; width: 277px; height: 24px; margin-right: 3px; padding: 0 3px; border: 1px solid #3c3c3c; background: linear-gradient(#6f6f6f, #5e5e5e); }
.combo select { flex: 1; align-self: stretch; border-right: 1px solid #3c3c3c; margin-right: 3px; }
.picker button { width: 25px; }
section + section { margin-top: 3px; }
section:nth-of-type(4) { margin-top: 0; }
h3 { display: flex; justify-content: space-between; height: 20px; padding: 0 6px; margin-bottom: -1px; border: 1px solid #333; background: #4a4a4a; font-weight: bold; line-height: 17px; }
table { width: 331px; margin-left: 17px; border-collapse: collapse; table-layout: fixed; }
tr { height: 19px; }
th, td { padding: 0 0 0 6px; border: 1px solid #505050; font-weight: normal; text-align: left; white-space: nowrap; overflow: hidden; line-height: 14px; }
th { width: 154px; }
td { padding: 0 0 2px 2px; }
td.off { color: #a4a4a4; }
.lw { display: inline-block; width: 65px; height: 1px; margin-right: 4px; background: #fff; vertical-align: 4px; }
.side { width: 20px; display: flex; flex-direction: column; margin-top: 2px; }
.side button { height: 121px; background: #525252; border: 1px solid #3a3a3a; color: #a0a0a0; }
.side button.on { margin-left: -1px; background: #5d5d5d; border-left-color: #5d5d5d; color: #fff; }

.command { position: absolute; left: 731px; bottom: 1px; width: 427px; height: 26px; display: flex; align-items: center; background: #5d5d5d; border: 1px solid #444; color: #ccc; }
.command button { width: 21px; }
.grip { background: radial-gradient(circle, #aaa 1px, transparent 1px) 0 0 / 3px 3px; flex: none; }
.command .grip { width: 6px; height: 20px; margin-left: 3px; }
.field { flex: 1; align-self: stretch; display: flex; align-items: center; gap: 5px; padding: 0 3px 0 4px; background: #9c9c9c; }
.prompt { width: 15px; height: 13px; background: #444; color: #ddd; font: bold 8px/12px "DejaVu Sans Mono", monospace; text-align: center; border-radius: 2px; }
.field input { flex: 1; font: italic 12px "DejaVu Sans Mono", monospace; }
.field input::placeholder { color: #555; opacity: 1; }
.field .tri { border-top-color: #333; }

.dock { width: 32px; padding: 0 3px 0 4px; background: #5d5d5d; display: flex; flex-direction: column; gap: 1px; }
.bank { display: flex; flex-direction: column; align-items: center; border: 1px solid #363636; }
.bank .grip { width: 15px; height: 6px; margin: 1px 0; }
.bank button { height: 22px; }
.bank hr { width: 19px; height: 2px; margin: 2px 0; border: 0; background: #eee; }

.status { position: relative; display: flex; justify-content: space-between; flex: none; height: 29px; background: #383838; border-top: 1px solid #5a5a5a; }
.layouts { display: flex; padding-left: 10px; gap: 2px; color: #b0b0b0; }
.layouts button { width: 63px; height: 17px; padding-bottom: 2px; background: linear-gradient(#494949, #5f5f5f); clip-path: polygon(0 0, 100% 0, 57px 100%, 6px 100%); }
.layouts .on { width: 60px; background: linear-gradient(#6a6a6a, #9a9a9a); color: #fff; font-weight: bold; }
.layouts .add { width: 22px; clip-path: none; border-radius: 0 0 8px 2px; }
.cells { display: flex; background: #383838; }
.cell { display: flex; align-items: center; justify-content: space-evenly; height: 27px; padding-bottom: 2px; background: #505050; border: 1px solid #787878; border-right-color: #333; white-space: nowrap; }
.coords { width: 213px; padding-left: 22px; font-size: 12px; } .model { width: 51px; font-size: 12px; } .grids { width: 66px; }
.tip { position: absolute; right: 175px; bottom: 15px; width: 302px; height: 25px; display: flex; align-items: center; gap: 13px; padding: 0 0 2px 10px; border: 1px solid #888; background: #f1f2f7; color: #505050; }
.tip span:nth-of-type(1) { margin-left: -5px; }
.tip span:nth-of-type(n + 3) { margin-left: 3px; }

.taskbar { display: flex; flex: none; height: 40px; background: #1f1a16; }
.taskbar > button { width: 49px; }
.taskbar > .run { position: relative; }
.run::after { content: ""; position: absolute; left: 5px; right: 4px; bottom: 0; height: 2px; background: #76b9ed; }
.taskbar > .front { background: #4e4a47; }
.front::after { left: 0; right: 0; }
.tray { display: flex; align-items: center; margin-left: auto; gap: 9px; }
.who { margin-right: 12px; }
.clock { width: 74px; display: flex; flex-direction: column; align-items: center; line-height: 18px; }
.bell { position: relative; width: 42px; }
.bell b { position: absolute; left: 8px; top: 6px; width: 16px; height: 16px; border: 1px solid #888; border-radius: 50%; background: #333; font: bold 10px/14px "Open Sans", sans-serif; text-align: center; }
</style>
